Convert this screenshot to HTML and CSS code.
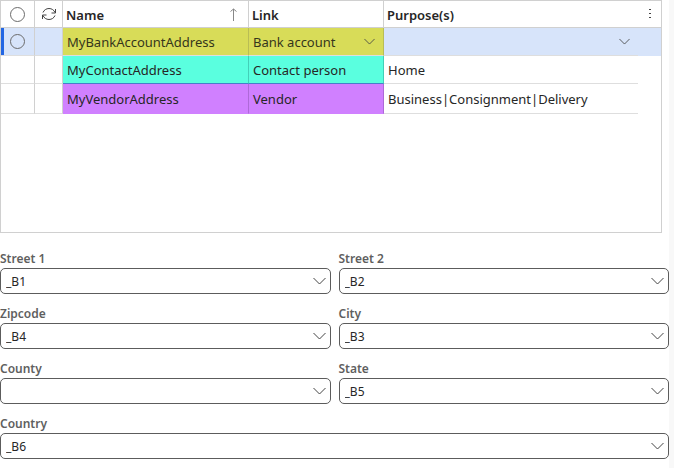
FILE: index.html
```html
<!DOCTYPE html>
<html lang="en">
<head>
    <meta charset="UTF-8">
    <meta name="viewport" content="width=device-width, initial-scale=1.0">
    <title>Addresses</title>
    <link rel="stylesheet" href="styles.css">
</head>
<body>
    <main class="page">
        <div class="grid-panel">
            <table class="address-grid">
                <colgroup>
                    <col class="col-select">
                    <col class="col-sync">
                    <col class="col-name">
                    <col class="col-link">
                    <col>
                    <col class="col-menu">
                </colgroup>
                <thead>
                    <tr>
                        <th class="mark"><input type="radio" class="row-radio" name="all" aria-label="Select all"></th>
                        <th class="mark">
                            <button class="icon-btn" aria-label="Refresh">
                                <svg width="16" height="14" viewBox="0 0 16 14">
                                    <path d="M2 5.500C3 3 5.300 1.500 8 1.500S13 3 14 5.500M14.500 2v4h-4M14 8.500C13 11 10.700 12.500 8 12.500S3 11 2 8.500M1.500 12V8h4"/>
                                </svg>
                            </button>
                        </th>
                        <th>
                            <div class="head-cell">
                                Name
                                <svg class="sort" width="9" height="14" viewBox="0 0 9 14"><path d="M4.500 13V1M1.500 3.500l3-2.500 3 2.500"/></svg>
                            </div>
                        </th>
                        <th>Link</th>
                        <th>Purpose(s)</th>
                        <th class="mark">
                            <button class="icon-btn" aria-label="Grid options">
                                <svg class="dots" width="4" height="12" viewBox="0 0 4 12">
                                    <path d="M1 1h2v1H1zM1 5h2v1H1zM1 9h2v1H1z"/>
                                </svg>
                            </button>
                        </th>
                    </tr>
                </thead>
                <tbody>
                    <tr class="selected">
                        <td class="mark"><input type="radio" class="row-radio" name="row" aria-label="Select MyBankAccountAddress"></td>
                        <td></td>
                        <td class="yellow">MyBankAccountAddress</td>
                        <td class="yellow">
                            <select class="cell-select" aria-label="Link"><option>Bank account</option></select>
                        </td>
                        <td>
                            <select class="cell-select" aria-label="Purpose(s)"><option></option></select>
                        </td>
                        <td></td>
                    </tr>
                    <tr>
                        <td></td>
                        <td></td>
                        <td class="aqua">MyContactAddress</td>
                        <td class="aqua">Contact person</td>
                        <td>Home</td>
                        <td></td>
                    </tr>
                    <tr>
                        <td></td>
                        <td></td>
                        <td class="purple">MyVendorAddress</td>
                        <td class="purple">Vendor</td>
                        <td>Business|Consignment|Delivery</td>
                        <td></td>
                    </tr>
                </tbody>
            </table>
        </div>

        <form class="address-form">
            <div class="field">
                <label for="street1">Street 1</label>
                <select id="street1"><option>_B1</option></select>
            </div>
            <div class="field">
                <label for="street2">Street 2</label>
                <select id="street2"><option>_B2</option></select>
            </div>
            <div class="field">
                <label for="zipcode">Zipcode</label>
                <select id="zipcode"><option>_B4</option></select>
            </div>
            <div class="field">
                <label for="city">City</label>
                <select id="city"><option>_B3</option></select>
            </div>
            <div class="field">
                <label for="county">County</label>
                <select id="county"><option></option></select>
            </div>
            <div class="field">
                <label for="state">State</label>
                <select id="state"><option>_B5</option></select>
            </div>
            <div class="field wide">
                <label for="country">Country</label>
                <select id="country"><option>_B6</option></select>
            </div>
        </form>
    </main>
</body>
</html>
```

FILE: styles.css
```css
:root {
    --line: #d0d0d0;
    --field-border: #5c5c5c;
    --text: #262626;
}

* {
    margin: 0;
    padding: 0;
    box-sizing: border-box;
}

body {
    font-family: 'Noto Sans', sans-serif;
    font-size: 13px;
    color: var(--text);
    background: #f8f8f8;
}

.page {
    min-height: 100vh;
    margin-right: 5px;
    background: white;
}

/* Grid */
.grid-panel {
    min-height: 233px;
    margin-right: 7px;
    border: 1px solid var(--line);
}

.address-grid {
    width: 100%;
    table-layout: fixed;
    border-collapse: separate;
    border-spacing: 0;
}

.col-select {
    width: 34px;
}

.col-sync {
    width: 28px;
}

.col-name {
    width: 186px;
}

.col-link {
    width: 135px;
}

.col-menu {
    width: 23px;
}

th {
    height: 27px;
    padding: 2px 4px 0 3px;
    border-right: 1px solid var(--line);
    border-bottom: 1px solid var(--line);
    font-weight: 600;
    line-height: 20px;
    text-align: left;
    white-space: nowrap;
}

td {
    height: 28px;
    padding: 0 4px;
    border-right: 1px solid var(--line);
    border-bottom: 1px solid #dedede;
    line-height: 20px;
    white-space: nowrap;
}

tr:last-child td {
    height: 30px;
}

th:nth-last-child(-n+2),
td:nth-last-child(-n+2) {
    border-right: none;
}

td:last-child {
    border-bottom: none;
}

.mark {
    padding: 0;
    text-align: center;
}

.head-cell {
    display: flex;
    align-items: center;
    justify-content: space-between;
    padding-right: 6px;
}

.selected td {
    background-color: #d7e4fa;
}

.selected td:first-child {
    box-shadow: inset 3px 0 #2266e3;
}

.selected td.yellow {
    color: #35361c;
    background-color: #d8dc58;
    border-right-color: #b9bd55;
}

td.aqua {
    background-color: #5affdf;
    border-right-color: #43cfb8;
    border-bottom-color: #477fc8;
}

td.purple {
    background-color: #d080ff;
    border-right-color: #ae69d8;
    border-bottom-color: #d080ff;
}

.row-radio {
    appearance: none;
    display: block;
    width: 15px;
    height: 15px;
    margin: 0 auto;
    border: 1px solid #6b6b6b;
    border-radius: 50%;
}

.icon-btn {
    display: flex;
    justify-content: center;
    width: 100%;
    border: none;
    background: none;
    cursor: pointer;
}

svg {
    fill: none;
    stroke: #444;
    stroke-width: 1;
}

.sort {
    stroke: #888;
}

.dots {
    fill: #444;
    stroke: none;
}

select {
    appearance: none;
    width: 100%;
    font: inherit;
    color: inherit;
    background: url("data:image/svg+xml,%3Csvg xmlns='http://www.w3.org/2000/svg' width='13' height='8' viewBox='0 0 13 8' fill='none' stroke='%23444'%3E%3Cpath d='M.5 1l6 6 6-6'/%3E%3C/svg%3E") no-repeat right 4px center;
}

.cell-select {
    display: block;
    height: 20px;
    border: none;
    background-position: right 4px center;
    background-size: 11px 7px;
}

/* Address fields */
.address-form {
    display: grid;
    grid-template-columns: 1fr 1fr;
    gap: 11px 8px;
    padding-top: 17px;
}

.field {
    display: flex;
    flex-direction: column;
    gap: 1px;
}

.field label {
    font-size: 12px;
    font-weight: 600;
    line-height: 17px;
    color: #5f5f5f;
}

.field select {
    height: 26px;
    padding: 0 20px 0 5px;
    border: 1px solid var(--field-border);
    border-radius: 5px;
    font-size: 12px;
}

.wide {
    grid-column: 1 / -1;
}
```
